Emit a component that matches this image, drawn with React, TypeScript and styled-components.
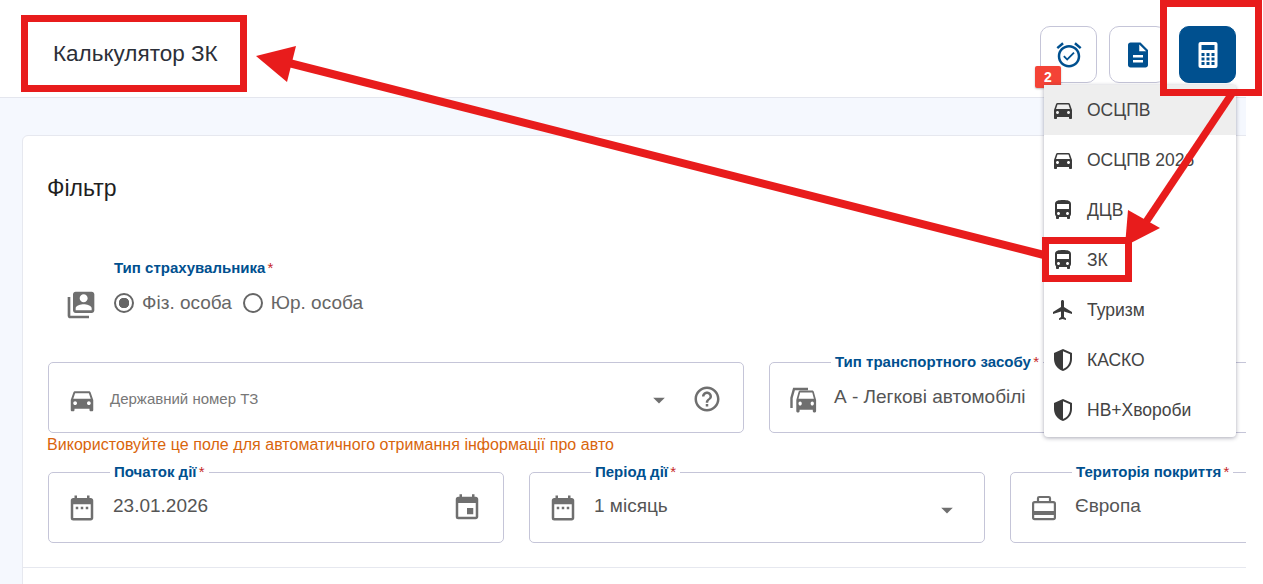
import styled, { createGlobalStyle } from 'styled-components'
import {
  MdDateRange,
  MdDirectionsBus,
  MdDirectionsCar,
  MdEvent,
  MdFlight,
  MdOutlineHelpOutline,
  MdArrowDropDown,
  MdSwitchAccount,
} from 'react-icons/md'

const BLUE = '#00508f'
const RED = '#e81c1c'

const Global = createGlobalStyle`
  html, body { margin: 0; padding: 0; }
  body {
    font-family: "Liberation Sans", Arial, sans-serif;
    background: #fff;
    overflow: hidden;
    height: 584px;
    color: #212121;
  }
`

const HalfShield = () => (
  <svg width="24" height="24" viewBox="0 0 24 24" fill="currentColor">
    <path d="M12 1L3 5v6c0 5.55 3.84 10.74 9 12 5.16-1.26 9-6.45 9-12V5l-9-4zm0 2.18l7 3.12V11c0 4.52-2.98 8.69-7 9.93V3.18z" />
  </svg>
)

const AlarmCheck = () => (
  <svg width="30" height="30" viewBox="0 0 24 24" fill={BLUE}>
    <path d="M22 5.72l-4.6-3.86-1.29 1.53 4.6 3.86L22 5.72zM7.88 3.39L6.6 1.86 2 5.71l1.29 1.53 4.59-3.85zM12 4c-4.97 0-9 4.03-9 9s4.03 9 9 9 9-4.03 9-9-4.03-9-9-9zm0 16c-3.87 0-7-3.13-7-7s3.13-7 7-7 7 3.13 7 7-3.13 7-7 7zm-1.46-5.47L8.41 12.4l-1.06 1.06 3.18 3.18 6-6-1.06-1.06-4.93 4.95z" />
  </svg>
)

const DocIcon = () => (
  <svg width="30" height="30" viewBox="0 0 24 24" fill={BLUE}>
    <path d="M14 2H6c-1.1 0-1.99.9-1.99 2L4 20c0 1.1.89 2 1.99 2H18c1.1 0 2-.9 2-2V8l-6-6zm2 16H8v-2h8v2zm0-4H8v-2h8v2zm-3-5V3.5L18.5 9H13z" />
  </svg>
)

const Calculator = () => (
  <svg width="20" height="26" viewBox="0 0 20 26">
    <rect x="0.5" y="0" width="19" height="26" rx="2" fill="#fff" />
    <rect x="3.5" y="3" width="13" height="5" fill={BLUE} />
    {[11, 15.5, 20].map((y) =>
      [3.5, 8.5, 13.5].map((x) => <rect key={`${x}-${y}`} x={x} y={y} width="3" height="3" fill={BLUE} />),
    )}
  </svg>
)

const CarsIcon = () => (
  <svg width="30" height="30" viewBox="0 0 30 30" fill="currentColor">
    <path d="M3.5 23V13L6 4h14" fill="none" stroke="currentColor" strokeWidth="2.4" />
    <g transform="translate(5,-1.5) scale(1.1,1.38)">
      <path d="M18.92 6.01C18.72 5.42 18.16 5 17.5 5h-11c-.66 0-1.21.42-1.42 1.01L3 12v8c0 .55.45 1 1 1h1c.55 0 1-.45 1-1v-1h12v1c0 .55.45 1 1 1h1c.55 0 1-.45 1-1v-8l-2.08-5.99zM6.5 16c-.83 0-1.5-.67-1.5-1.5S5.67 13 6.5 13s1.5.67 1.5 1.5S7.33 16 6.5 16zm11 0c-.83 0-1.5-.67-1.5-1.5s.67-1.5 1.5-1.5 1.5.67 1.5 1.5-.67 1.5-1.5 1.5zM5 11l1.5-4.5h11L19 11H5z" />
    </g>
  </svg>
)

const BagIcon = () => (
  <svg width="30" height="30" viewBox="0 0 30 30" fill="none" stroke="currentColor" strokeWidth="2.2">
    <path d="M9 9V5.2C9 4.5 9.5 4 10.2 4h9.6c.7 0 1.2.5 1.2 1.2V9" />
    <rect x="4.1" y="9.1" width="21.8" height="17" rx="1.6" />
    <rect x="3" y="18" width="24" height="4" fill="currentColor" stroke="none" />
  </svg>
)

const menu = [
  { label: 'ОСЦПВ', icon: <MdDirectionsCar size={24} />, active: true },
  { label: 'ОСЦПВ 2026', icon: <MdDirectionsCar size={24} /> },
  { label: 'ДЦВ', icon: <MdDirectionsBus size={24} /> },
  { label: 'ЗК', icon: <MdDirectionsBus size={24} /> },
  { label: 'Туризм', icon: <MdFlight size={24} /> },
  { label: 'КАСКО', icon: <HalfShield /> },
  { label: 'НВ+Хвороби', icon: <HalfShield /> },
]

export default function App() {
  return (
    <Page>
      <Global />
      <Shell>
        <Header>
          <Title>Калькулятор ЗК</Title>
          <HeaderButtons>
            <SquareButton>
              <AlarmCheck />
              <Badge>2</Badge>
            </SquareButton>
            <SquareButton>
              <DocIcon />
            </SquareButton>
            <SquareButton $active>
              <Calculator />
            </SquareButton>
          </HeaderButtons>
        </Header>

        <Content>
          <Card>
            <CardTitle>Фільтр</CardTitle>
            <RadioRow>
              <RowIcon>
                <MdSwitchAccount size={32} />
              </RowIcon>
              <RadioGroup>
                <GroupLabel>
                  Тип страхувальника <Star>*</Star>
                </GroupLabel>
                <Radios>
                  <Radio>
                    <RadioCircle $checked />
                    Фіз. особа
                  </Radio>
                  <Radio>
                    <RadioCircle />
                    Юр. особа
                  </Radio>
                </Radios>
              </RadioGroup>
            </RadioRow>

            <FieldRow $first>
              <Field>
                <FieldIcon $low>
                  <MdDirectionsCar size={30} />
                </FieldIcon>
                <Placeholder>Державний номер ТЗ</Placeholder>
                <Trailing $top={5} $right={19}>
                  <MdArrowDropDown size={28} />
                </Trailing>
                <Trailing $top={3}>
                  <MdOutlineHelpOutline size={30} />
                </Trailing>
              </Field>
              <Field>
                <Legend>
                  Тип транспортного засобу <Star>*</Star>
                </Legend>
                <FieldIcon $low>
                  <CarsIcon />
                </FieldIcon>
                <Value $top={-1}>А - Легкові автомобілі</Value>
              </Field>
            </FieldRow>
            <Hint>Використовуйте це поле для автоматичного отримання інформації про авто</Hint>

            <FieldRow>
              <Field>
                <Legend>
                  Початок дії <Star>*</Star>
                </Legend>
                <FieldIcon>
                  <MdDateRange size={30} />
                </FieldIcon>
                <Value>23.01.2026</Value>
                <Trailing $top={1}>
                  <MdEvent size={30} />
                </Trailing>
              </Field>
              <Field>
                <Legend>
                  Період дії <Star>*</Star>
                </Legend>
                <FieldIcon>
                  <MdDateRange size={30} />
                </FieldIcon>
                <Value>1 місяць</Value>
                <Trailing $top={5} $right={2}>
                  <MdArrowDropDown size={28} />
                </Trailing>
              </Field>
              <Field>
                <Legend>
                  Територія покриття <Star>*</Star>
                </Legend>
                <FieldIcon>
                  <BagIcon />
                </FieldIcon>
                <Value>Європа</Value>
              </Field>
            </FieldRow>
            <Divider />
          </Card>
        </Content>
      </Shell>

      <Dropdown>
        {menu.map((m) => (
          <MenuItem key={m.label} $active={m.active}>
            <MenuIcon>{m.icon}</MenuIcon>
            {m.label}
          </MenuItem>
        ))}
      </Dropdown>

      <Frame $x={21} $y={15} $w={226} $h={77} />
      <Frame $x={1160} $y={0} $w={102} $h={96} />
      <Frame $x={1042} $y={237} $w={90} $h={45} />
      <Arrows width="1263" height="584" viewBox="0 0 1263 584">
        <line x1="285" y1="62" x2="1044" y2="255" stroke={RED} strokeWidth="8" />
        <polygon points="256,56 296,46 287,82" fill={RED} />
        <line x1="1233" y1="92" x2="1142" y2="228" stroke={RED} strokeWidth="7.5" />
        <polygon points="1125,246 1128,210 1160,228" fill={RED} />
      </Arrows>
    </Page>
  )
}

const Page = styled.div`
  position: relative;
  width: 1263px;
  height: 584px;
  overflow: hidden;
  background: #fff;
`

const Shell = styled.div`
  width: 1246px;
  height: 584px;
  overflow: hidden;
  background: #f5f8fe;
`

const Header = styled.header`
  height: 98px;
  box-sizing: border-box;
  background: #fff;
  border-bottom: 1px solid #e4e6ee;
  display: flex;
  align-items: flex-start;
  justify-content: space-between;
  padding: 26px 10px 0 53px;
`

const Title = styled.h1`
  margin: 14px 0 0;
  font-size: 22.5px;
  font-weight: 400;
  line-height: 28px;
  color: #2c2f38;
`

const HeaderButtons = styled.div`
  display: flex;
  gap: 12px;
`

const SquareButton = styled.div<{ $active?: boolean }>`
  position: relative;
  width: 57px;
  height: 57px;
  box-sizing: border-box;
  margin-left: ${(p) => (p.$active ? '1px' : '0')};
  border-radius: 10px;
  border: 1px solid ${(p) => (p.$active ? BLUE : '#c5c5d8')};
  background: ${(p) => (p.$active ? BLUE : '#fff')};
  display: flex;
  align-items: center;
  justify-content: center;
`

const Badge = styled.span`
  position: absolute;
  left: -6px;
  top: 39px;
  width: 26px;
  height: 22px;
  border-radius: 2px;
  background: #f44336;
  color: #fff;
  font-size: 14px;
  font-weight: 700;
  display: flex;
  align-items: center;
  justify-content: center;
  box-shadow: 0 1px 2px rgba(0, 0, 0, 0.25);
`

const Content = styled.main`
  padding: 37px 0 0 22px;
`

const Card = styled.section`
  width: 1400px;
  background: #fff;
  border: 1px solid #e6e8ef;
  border-radius: 6px;
  padding: 0 0 0 25px;
  height: 480px;
  box-sizing: border-box;
  overflow: hidden;
`

const CardTitle = styled.h2`
  margin: 38px 0 0 -1px;
  font-size: 23px;
  font-weight: 400;
  line-height: 28px;
  color: #1f1f1f;
`

const RadioRow = styled.div`
  display: flex;
  align-items: flex-end;
  margin-top: 56px;
  padding-left: 17px;
  gap: 17px;
`

const RowIcon = styled.div`
  color: #6f6f6f;
  display: flex;
  margin-bottom: -7px;
`

const RadioGroup = styled.div`
  display: flex;
  flex-direction: column;
`

const GroupLabel = styled.div`
  font-size: 15px;
  font-weight: 700;
  line-height: 18px;
  color: ${BLUE};
  margin-top: 1px;
`

const Star = styled.span`
  color: #c62828;
  font-weight: 400;
  margin-left: -2px;
`

const Radios = styled.div`
  display: flex;
  gap: 11px;
  margin-top: 15px;
`

const Radio = styled.label`
  display: flex;
  align-items: center;
  gap: 8px;
  font-size: 19px;
  line-height: 22px;
  color: #666;
`

const RadioCircle = styled.span<{ $checked?: boolean }>`
  width: 20px;
  height: 20px;
  box-sizing: border-box;
  border-radius: 50%;
  border: 2px solid #666;
  background: ${(p) => (p.$checked ? 'radial-gradient(circle, #666 0 5px, transparent 5.5px)' : 'transparent')};
`

const FieldRow = styled.div<{ $first?: boolean }>`
  display: grid;
  grid-template-columns: ${(p) => (p.$first ? '696px 696px' : '456px 456px 456px')};
  column-gap: 25px;
  margin-top: ${(p) => (p.$first ? '48px' : '17px')};
`

const Field = styled.div`
  position: relative;
  height: 71px;
  box-sizing: border-box;
  border: 1px solid #c5c5d8;
  border-radius: 5px;
  display: flex;
  align-items: center;
  padding: 0 21px 0 18px;
`

const Legend = styled.span`
  position: absolute;
  top: -10px;
  left: 61px;
  padding: 0 4px;
  background: #fff;
  font-size: 15px;
  font-weight: 700;
  line-height: 18px;
  color: ${BLUE};
  white-space: nowrap;
`

const FieldIcon = styled.span<{ $low?: boolean }>`
  color: #6f6f6f;
  display: flex;
  width: 30px;
  margin-right: 16px;
  margin-top: ${(p) => (p.$low ? '4px' : '1px')};
`

const Placeholder = styled.span`
  font-size: 15px;
  color: #777;
  flex: 1;
  margin-left: -3px;
  margin-top: 2px;
`

const Value = styled.span<{ $top?: number }>`
  flex: 1;
  font-size: 19px;
  color: #555;
  margin-top: ${(p) => p.$top ?? -3}px;
`

const Trailing = styled.span<{ $top?: number; $right?: number }>`
  display: flex;
  color: #6f6f6f;
  margin-top: ${(p) => p.$top ?? 0}px;
  margin-right: ${(p) => p.$right ?? 0}px;
`

const Hint = styled.div`
  font-size: 16px;
  line-height: 20px;
  letter-spacing: 0.04px;
  color: #d9650c;
  margin: 2px 0 0 -1px;
`

const Divider = styled.hr`
  border: 0;
  border-top: 1px solid #e6e8ef;
  margin: 24px 0 0 -25px;
`

const Dropdown = styled.nav`
  position: absolute;
  left: 1044px;
  top: 85px;
  width: 192px;
  padding-bottom: 2px;
  background: #fff;
  border-radius: 4px;
  box-shadow: 0 1px 4px rgba(40, 40, 70, 0.4);
`

const MenuItem = styled.div<{ $active?: boolean }>`
  height: 50px;
  display: flex;
  align-items: center;
  padding-left: 7px;
  font-size: 17.5px;
  color: #444;
  background: ${(p) => (p.$active ? '#eeeeee' : 'transparent')};
`

const MenuIcon = styled.span`
  width: 24px;
  margin-right: 12px;
  display: flex;
  color: #3a3a3a;
`

const Frame = styled.div<{ $x: number; $y: number; $w: number; $h: number }>`
  position: absolute;
  left: ${(p) => p.$x}px;
  top: ${(p) => p.$y}px;
  width: ${(p) => p.$w}px;
  height: ${(p) => p.$h}px;
  box-sizing: border-box;
  border: 7px solid ${RED};
`

const Arrows = styled.svg`
  position: absolute;
  left: 0;
  top: 0;
`
